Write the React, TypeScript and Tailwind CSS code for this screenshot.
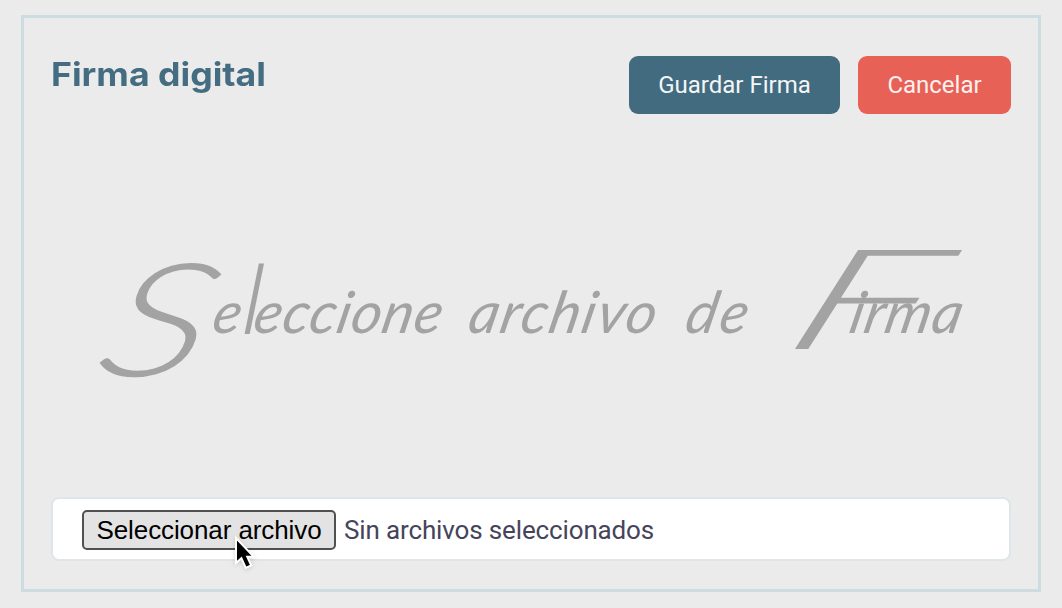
const Cursor = () => (
    <svg className="absolute left-[152px] top-[24px] drop-shadow-sm" width="22" height="38" viewBox="0 0 22 38">
        <path d="M2 4v25l5.400-4.800 4.400 9.600 5.400-2.400-4-8.600h6.600z" fill="#000" stroke="#fff" strokeWidth="2"/>
    </svg>
)

const SignaturePlaceholder = () => {
    return (
        <div
            className="flex h-[130px] pl-[40px] items-baseline whitespace-pre font-['Lato'] italic text-[58px] leading-[130px] text-[#a3a3a3]">
            <span className="flex w-[380px] items-baseline">
                <span className="inline-block w-[124px] origin-bottom-left translate-y-[43px] scale-x-[1.35] -skew-x-12 font-light text-[158px]">S</span>
                <span className="inline-block -skew-x-12">e</span>
                <span className="inline-block origin-[0_86px] -skew-x-12 scale-y-[1.65]">l</span>
                <span className="inline-block -skew-x-12 tracking-[1px]">eccione</span>
            </span>
            <span className="inline-block w-[217px] -skew-x-12 tracking-[1.8px]">archivo</span>
            <span className="inline-block w-[88px] -skew-x-12 tracking-[3px]">de</span>
            <span className="flex items-baseline">
                <span className="inline-block w-[76px] origin-bottom-left -translate-x-[2px] translate-y-[16px] scale-x-[1.9] -skew-x-12 font-light text-[140px]">F</span>
                <span className="inline-block -skew-x-12 tracking-[1px]">irma</span>
            </span>
        </div>
    )
}

const App = () => {

    return (
        <div className="h-[608px] w-[1062px] bg-[#ebebeb] pl-[21px] pt-[15px] font-['Roboto',sans-serif]">
            <div className="flex h-[577px] w-[1020px] flex-col border-3 border-[#cddce1] px-[27px] pb-[28px] pt-[38px]">
                <div className="flex items-start justify-between">
                    <h2 className="origin-left scale-x-[1.08] font-['Inter',sans-serif] text-[33px] font-bold leading-9 text-[#456d82]">
                        Firma digital
                    </h2>
                    <div className="flex gap-[18px]">
                        <button className="h-[58px] w-[211px] rounded-[9px] bg-[#436b7f] text-2xl text-[#f3f6f7]">
                            Guardar Firma
                        </button>
                        <button className="h-[58px] w-[153px] rounded-[9px] bg-[#e86156] text-2xl text-[#fdf1f0]">
                            Cancelar
                        </button>
                    </div>
                </div>
                <div className="flex flex-1 flex-col pt-[93px]">
                    <SignaturePlaceholder/>
                </div>
                <div
                    className="flex h-16 shrink-0 items-center gap-2 rounded-lg border-2 border-[#dfe6e9] bg-white pl-[29px] pt-0.5">
                    <div className="relative">
                        <button
                            className="h-10 w-[254px] rounded-[5px] border-2 border-[#505050] bg-[#e3e3e3] font-['Liberation_Sans',sans-serif] text-[26px] leading-none tracking-[-0.1px] text-black">
                            Seleccionar archivo
                        </button>
                        <Cursor/>
                    </div>
                    <span className="text-[26px] tracking-[-0.14px] text-[#45445a]">Sin archivos seleccionados</span>
                </div>
            </div>
        </div>
    )
}

export default App
